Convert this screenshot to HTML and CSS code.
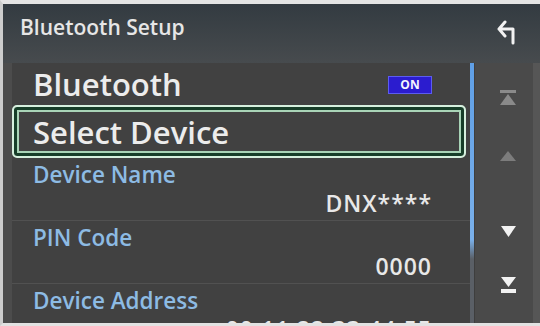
FILE: index.html
```html
<!DOCTYPE html>
<html>
<head>
  <meta charset="UTF-8">
  <meta name="viewport" content="width=device-width, initial-scale=1">
  <title>Bluetooth Setup</title>
  <link rel="stylesheet" href="styles.css">
</head>
<body>

<main class="screen">

  <header class="topbar">
    <h1 class="topbar__title">Bluetooth Setup</h1>
    <a href="#" class="topbar__back" aria-label="Back">
      <svg width="22" height="25" viewBox="0 0 22 25">
        <path d="M8 2 L2 9 L8 16 M2 9 H16 V23" fill="none" stroke="#f2f2f2" stroke-width="3" stroke-linecap="round" stroke-linejoin="round"/>
      </svg>
    </a>
  </header>

  <div class="body">

    <ul class="list">
      <li class="row row--main">
        <span>Bluetooth</span>
        <span class="badge">ON</span>
      </li>
      <li class="row row--main row--selected">Select Device</li>
      <li class="row row--info">
        <span class="row__label">Device Name</span>
        <span class="row__value">DNX****</span>
      </li>
      <li class="row row--info">
        <span class="row__label">PIN Code</span>
        <span class="row__value">0000</span>
      </li>
      <li class="row row--info">
        <span class="row__label">Device Address</span>
        <span class="row__value">00:11:22:33:44:55</span>
      </li>
    </ul>

    <div class="scrollbar"><div class="scrollbar__thumb"></div></div>

    <nav class="pager">
      <svg class="pager__icon" width="20" height="17" viewBox="0 0 20 17">
        <rect x="2" y="1" width="16" height="3" fill="#8a8a8a"/>
        <path d="M10 5 L18 16 H2 Z" fill="#8a8a8a"/>
      </svg>
      <svg class="pager__icon" width="16" height="10" viewBox="0 0 16 10">
        <path d="M8 0 L16 10 H0 Z" fill="#7c7c7c"/>
      </svg>
      <svg class="pager__icon" width="15" height="11" viewBox="0 0 15 11">
        <path d="M0 0 H15 L7.5 11 Z" fill="#f2f2f2"/>
      </svg>
      <svg class="pager__icon" width="17" height="18" viewBox="0 0 17 18">
        <path d="M1 1 H16 L8.5 11 Z" fill="#f2f2f2"/>
        <rect x="1" y="13" width="15" height="4" fill="#f2f2f2"/>
      </svg>
    </nav>

  </div>

</main>

</body>
</html>
```

FILE: styles.css
```css
html,
body {
  -webkit-font-smoothing: antialiased;
}

body {
  margin: 0;
  background-color: #dedede;
  font-family: "Open Sans", "Noto Sans", "Liberation Sans", sans-serif;
  color: #ececec;
}

.screen {
  box-sizing: border-box;
  display: flex;
  flex-direction: column;
  width: 540px;
  height: 326px;
  overflow: hidden;
  border-top: 4px solid #e4e4e4;
  border-left: 3px solid #cdcdcd;
  border-bottom: 3px solid #e2e2e2;
  background-color: #4c4c4c;
}


/* Title bar */

.topbar {
  box-sizing: border-box;
  display: flex;
  justify-content: space-between;
  align-items: flex-start;
  height: 59px;
  flex-shrink: 0;
  padding: 9px 21px 0 17px;
  background: linear-gradient(#333b41, #474b4e);
}

.topbar__title {
  margin: 0;
  font-size: 21px;
  font-weight: 600;
  line-height: 28px;
  color: #e6e6e6;
}

.topbar__back {
  display: block;
  margin-top: 7px;
}


/* List */

.body {
  display: flex;
  flex: 1;
  min-height: 0;
}

.list {
  width: 458px;
  margin: 0 0 0 9px;
  padding: 0;
  list-style: none;
  background-color: #414141;
}

.row {
  box-sizing: border-box;
}

.row--main {
  display: flex;
  justify-content: space-between;
  align-items: center;
  height: 42px;
  padding: 0 38px 0 21px;
  font-size: 31px;
  font-weight: 600;
}

.row--selected {
  height: 53px;
  margin: 0 4px 0 0;
  padding-left: 19px;
  border: 2px solid #d6f0de;
  border-radius: 5px;
  box-shadow: inset 0 0 0 3px #173e29, inset 0 0 0 5px #a9d4b7;
}

.badge {
  box-sizing: border-box;
  width: 44px;
  height: 18px;
  margin-top: 2px;
  border: 1px solid #5c5cf0;
  background-color: #2b1ccf;
  font-size: 12px;
  font-weight: 700;
  line-height: 16px;
  text-align: center;
  color: #f4f4ff;
}

.row--info {
  display: flex;
  flex-direction: column;
  height: 63px;
  padding: 3px 38px 0 21px;
  border-bottom: 1px solid #515151;
}

.row__label {
  font-size: 22.5px;
  font-weight: 600;
  line-height: 28px;
  color: #8dbbe4;
}

.row__value {
  align-self: flex-end;
  font-size: 23px;
  font-weight: 600;
  line-height: 28px;
  letter-spacing: 1px;
  color: #e8e8e8;
}


/* Scroll */

.scrollbar {
  width: 4px;
  flex-shrink: 0;
  background-color: #5a5f66;
}

.scrollbar__thumb {
  height: 196px;
  background: linear-gradient(#5f9fe6, #7ab0ea 90%, #5a5f66);
}

.pager {
  box-sizing: border-box;
  display: flex;
  flex-direction: column;
  align-items: center;
  width: 66px;
  padding: 26px 0 0 8px;
  border-left: 1px solid #3e3e3e;
  border-right: 7px solid #565656;
  background-color: #4a4a4a;
}

.pager__icon { display: block; }

.pager__icon:nth-child(2) { margin-top: 45px; }
.pager__icon:nth-child(3) { margin-top: 65px; }
.pager__icon:nth-child(4) { margin-top: 39px; }
```
